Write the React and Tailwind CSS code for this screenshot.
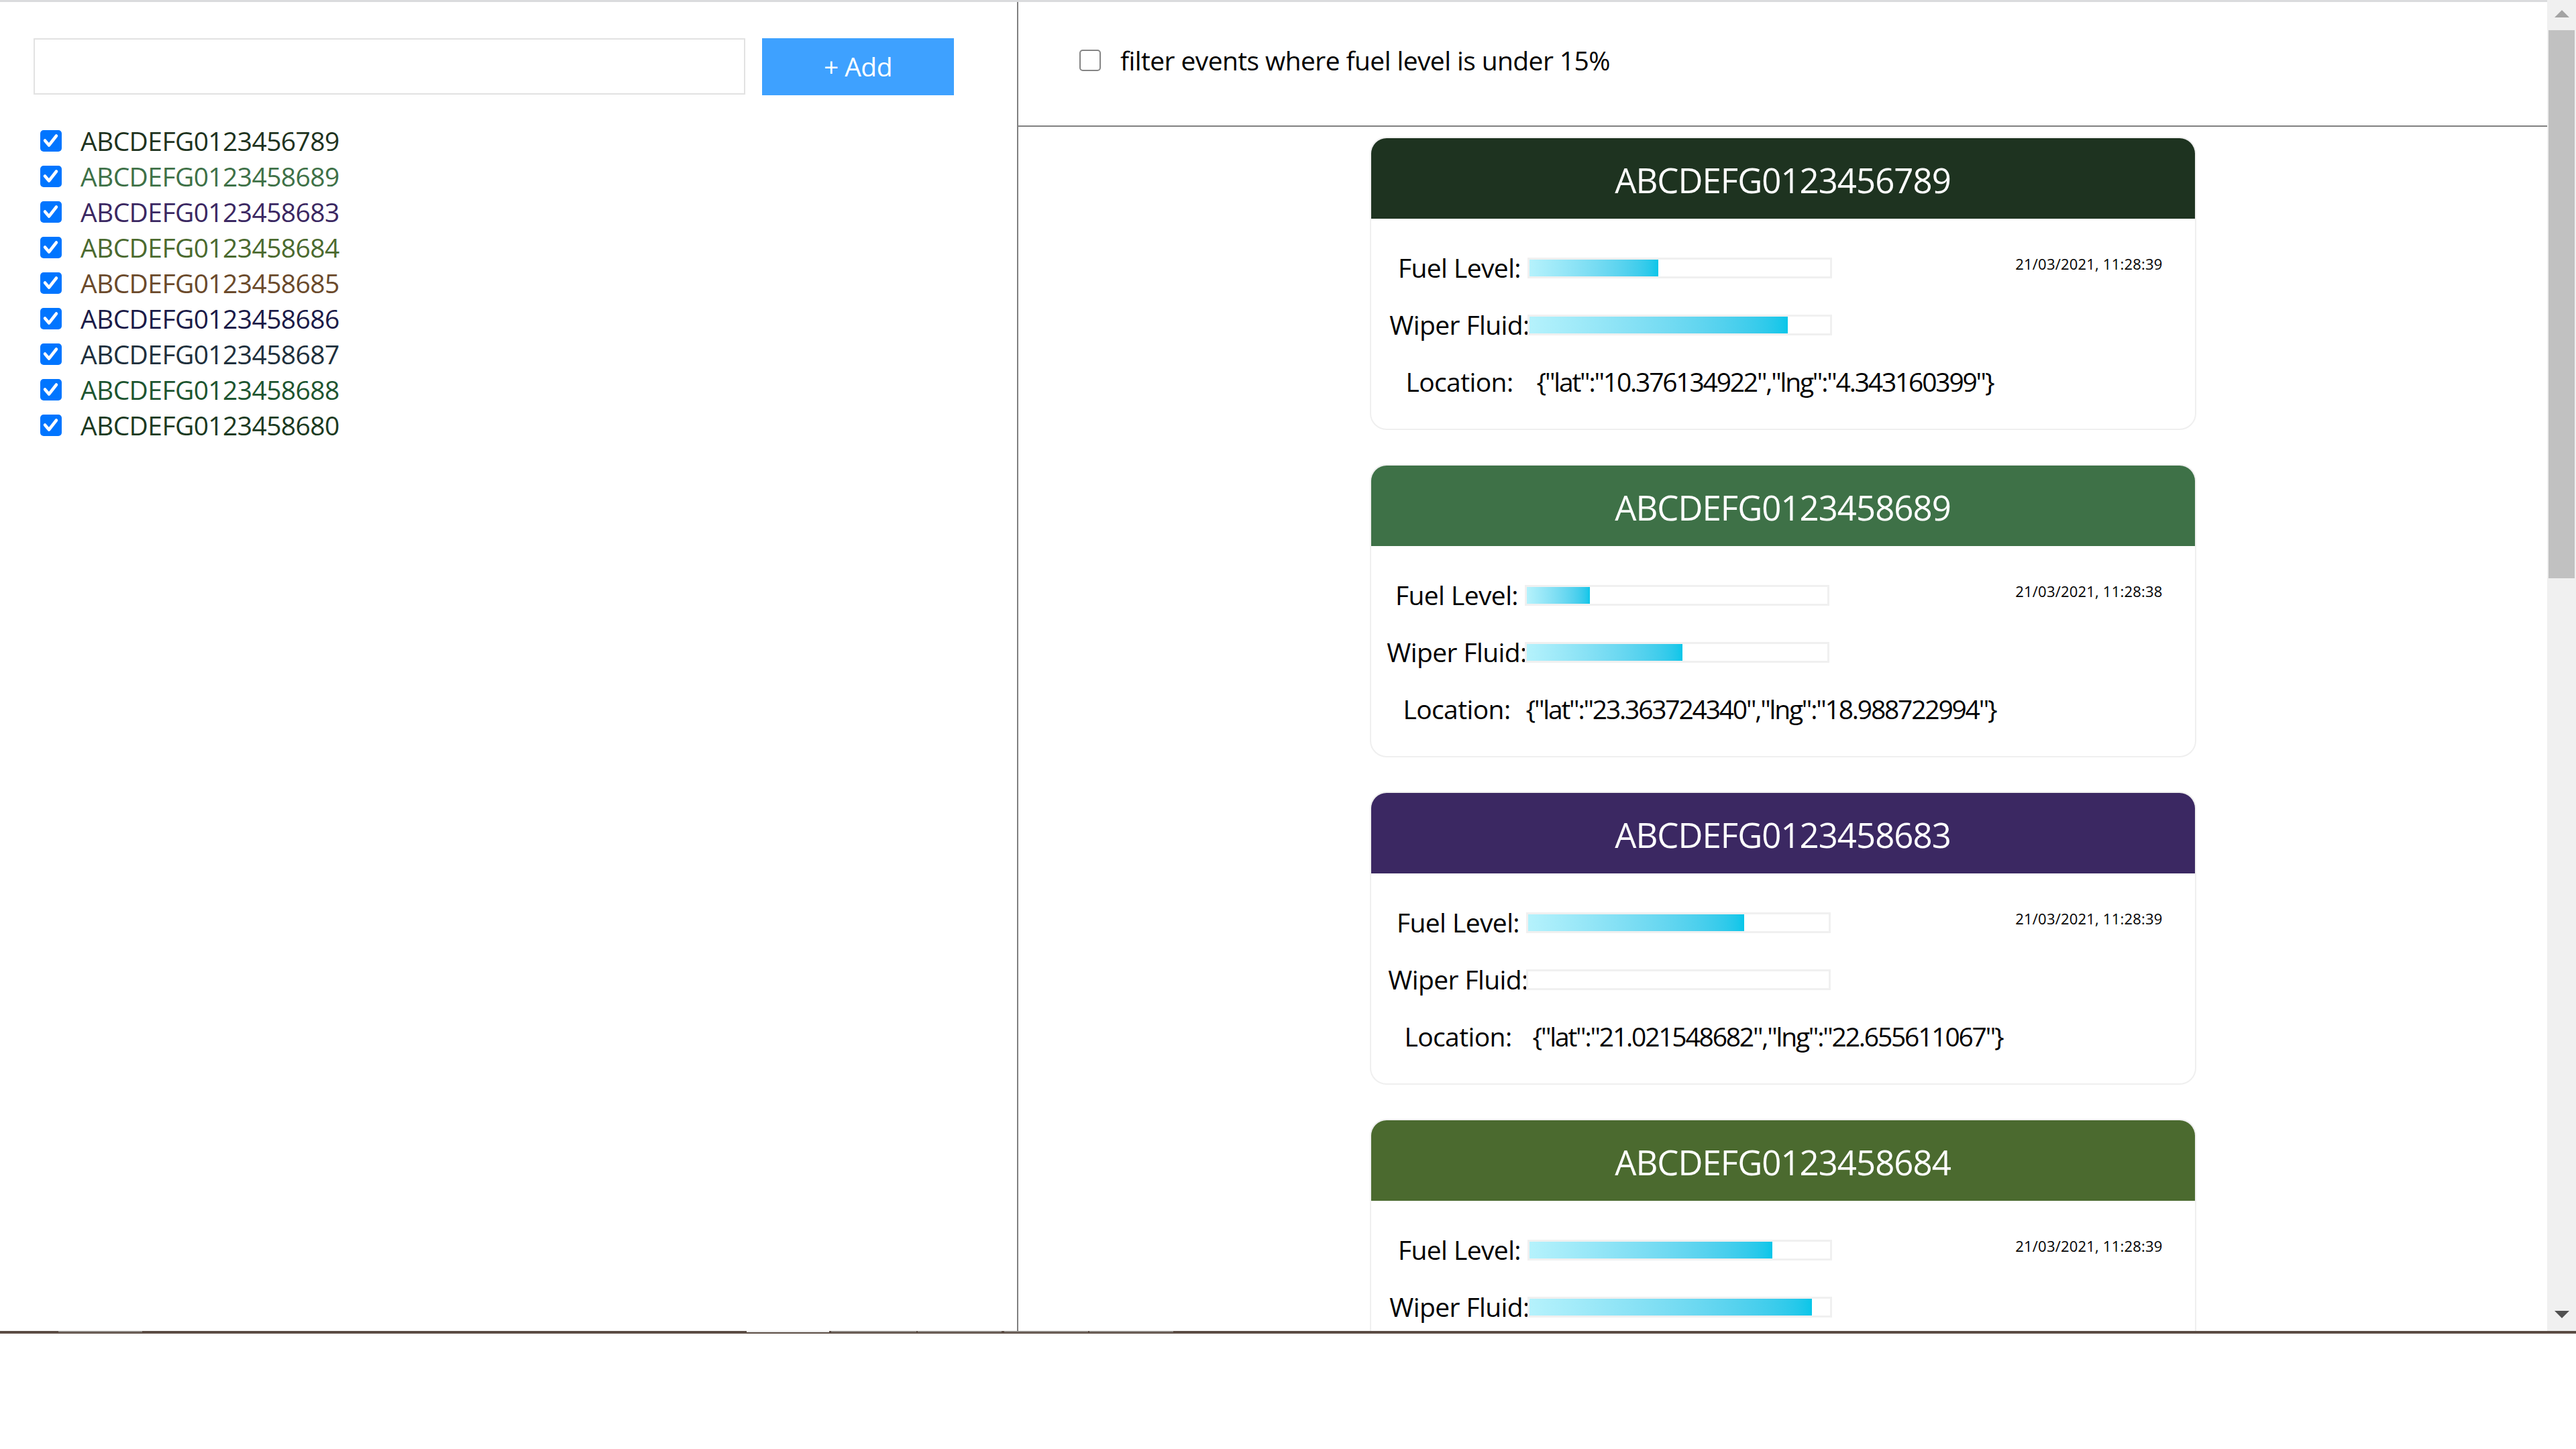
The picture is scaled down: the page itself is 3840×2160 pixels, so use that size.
import React from "react";

const F = "font-['Open_Sans',sans-serif]";
const T = "text-[39px] tracking-[-0.6px]";

const vehicles = [
  { id: "ABCDEFG0123456789", text: "text-[#1e3320]" },
  { id: "ABCDEFG0123458689", text: "text-[#3e7147]" },
  { id: "ABCDEFG0123458683", text: "text-[#3b2862]" },
  { id: "ABCDEFG0123458684", text: "text-[#4b6a2f]" },
  { id: "ABCDEFG0123458685", text: "text-[#6b4a2b]" },
  { id: "ABCDEFG0123458686", text: "text-[#1b1b48]" },
  { id: "ABCDEFG0123458687", text: "text-[#20303d]" },
  { id: "ABCDEFG0123458688", text: "text-[#1d5530]" },
  { id: "ABCDEFG0123458680", text: "text-[#1b3a22]" },
];

const cards = [
  {
    id: "ABCDEFG0123456789",
    bg: "bg-[#1e3320]",
    pl: "pl-[31px]",
    locMl: "ml-[14px]",
    fuel: 43,
    wiper: 86,
    date: "21/03/2021, 11:28:39",
    loc: '{"lat":"10.376134922","lng":"4.343160399"}',
  },
  {
    id: "ABCDEFG0123458689",
    bg: "bg-[#3e7147]",
    pl: "pl-[27px]",
    locMl: "ml-[2px]",
    fuel: 21,
    wiper: 52,
    date: "21/03/2021, 11:28:38",
    loc: '{"lat":"23.363724340","lng":"18.988722994"}',
  },
  {
    id: "ABCDEFG0123458683",
    bg: "bg-[#3b2862]",
    pl: "pl-[29px]",
    locMl: "ml-[10px]",
    fuel: 72,
    wiper: 0,
    date: "21/03/2021, 11:28:39",
    loc: '{"lat":"21.021548682","lng":"22.655611067"}',
  },
  {
    id: "ABCDEFG0123458684",
    bg: "bg-[#4b6a2f]",
    pl: "pl-[31px]",
    locMl: "ml-[14px]",
    fuel: 81,
    wiper: 94,
    date: "21/03/2021, 11:28:39",
    loc: '{"lat":"12.874512093","lng":"7.512034877"}',
  },
];

function Check({ checked }) {
  if (checked) {
    return (
      <span className="flex h-[32px] w-[32px] shrink-0 items-center justify-center rounded-[5px] bg-[#0075ff]">
        <svg viewBox="0 0 32 32" width="32" height="32">
          <path
            d="M7 15.5 L13 22.5 L24 8.5"
            fill="none"
            stroke="#ffffff"
            strokeWidth="4.5"
            strokeLinecap="round"
            strokeLinejoin="round"
          />
        </svg>
      </span>
    );
  }
  return (
    <span className="block h-[32px] w-[32px] shrink-0 rounded-[5px] border-[2px] border-[#858585] bg-white" />
  );
}

function Bar({ value }) {
  return (
    <div className="h-[31px] w-[454px] border-[3px] border-[#f0f0f0] bg-white">
      <div
        className="h-full bg-gradient-to-r from-[#b5f2fc] to-[#06c6e9]"
        style={{ width: `${value}%` }}
      />
    </div>
  );
}

function Card({ c }) {
  return (
    <div className="w-[1232px] shrink-0 overflow-hidden rounded-[25px] border-2 border-[#efefef] bg-white">
      <div className={`flex h-[120px] items-center justify-center pt-[5px] text-[51px] tracking-[-1px] text-white ${c.bg}`}>
        {c.id}
      </div>
      <div className={`flex pt-[31px] pb-[27px] pr-[48px] ${c.pl}`}>
        <div className={`grid grid-cols-[202px_auto] text-black ${T}`}>
          <div className="flex h-[85px] items-center justify-center whitespace-nowrap">Fuel Level:</div>
          <div className="flex h-[85px] items-center">
            <Bar value={c.fuel} />
          </div>
          <div className="flex h-[85px] items-center justify-center whitespace-nowrap">Wiper Fluid:</div>
          <div className="flex h-[85px] items-center">
            <Bar value={c.wiper} />
          </div>
          <div className="flex h-[85px] items-center justify-center whitespace-nowrap">Location:</div>
          <div className={`flex h-[85px] items-center whitespace-nowrap tracking-[-2.2px] ${c.locMl}`}>{c.loc}</div>
        </div>
        <div className="ml-auto mt-[20px] self-start whitespace-nowrap text-[22px] tracking-[0.2px] text-black">
          {c.date}
        </div>
      </div>
    </div>
  );
}

function Scrollbar() {
  return (
    <div className="flex h-full w-[43px] shrink-0 flex-col bg-[#f0f0f0]">
      <div className="flex h-[45px] items-start justify-center pt-[15px]">
        <svg width="22" height="11" viewBox="0 0 22 11">
          <path d="M11 0 L22 11 L0 11 Z" fill="#a3a3a3" />
        </svg>
      </div>
      <div className="mx-[2px] h-[817px] bg-[#c1c1c1]" />
      <div className="flex-1" />
      <div className="flex h-[30px] items-start justify-center">
        <svg width="22" height="11" viewBox="0 0 22 11">
          <path d="M0 0 L22 0 L11 11 Z" fill="#505050" />
        </svg>
      </div>
    </div>
  );
}

export default function App() {
  return (
    <div className={`flex h-[2160px] w-[3840px] flex-col bg-white ${F}`}>
      <div className="flex h-[1984px] w-full overflow-hidden">
        <div className="flex min-w-0 flex-1 flex-col">
          <div className="h-[3px] w-full bg-[#dadbdd]" />
          <div className="flex min-h-0 flex-1">
            {/* left pane */}
            <div className="w-[1516px] shrink-0 pl-[50px] pt-[54px]">
              <div className="flex items-start gap-[25px]">
                <div className="h-[84px] w-[1061px] border-2 border-[#e2e2e2] bg-white" />
                <button className={`flex h-[85px] w-[286px] items-center justify-center bg-[#3ea1ff] text-white ${T}`}>
                  + Add
                </button>
              </div>
              <div className="mt-[41px] flex flex-col pl-[10px]">
                {vehicles.map((v) => (
                  <div key={v.id} className="flex h-[53px] items-center gap-[28px]">
                    <Check checked />
                    <span className={`leading-[53px] ${T} ${v.text}`}>{v.id}</span>
                  </div>
                ))}
              </div>
            </div>
            <div className="w-[2px] shrink-0 bg-[#808080]" />
            {/* right pane */}
            <div className="flex min-w-0 flex-1 flex-col overflow-hidden">
              <div className="flex h-[186px] shrink-0 items-center gap-[29px] border-b-2 border-[#808080] pb-[11px] pl-[91px]">
                <Check checked={false} />
                <span className={`leading-[53px] text-black ${T}`}>filter events where fuel level is under 15%</span>
              </div>
              <div className="flex flex-col items-center gap-[51px] pt-[15px]">
                {cards.map((c) => (
                  <Card key={c.id} c={c} />
                ))}
              </div>
            </div>
          </div>
        </div>
        <Scrollbar />
      </div>
      <div className="flex h-[4px] w-full bg-[#5b4c44]">
        <div className="ml-[87px] h-[2px] w-[125px] bg-[#8c8682]" />
        <div className="ml-[901px] h-[2px] w-[123px] bg-[#e6e6e6]" />
        <div className="ml-[3px] h-[2px] w-[127px] bg-[#8c8682]" />
        <div className="ml-[2px] h-[2px] w-[125px] bg-[#8c8682]" />
        <div className="ml-[4px] h-[2px] w-[125px] bg-[#8c8682]" />
        <div className="ml-[2px] h-[2px] w-[125px] bg-[#8c8682]" />
      </div>
      <div className="flex-1 bg-white" />
    </div>
  );
}
